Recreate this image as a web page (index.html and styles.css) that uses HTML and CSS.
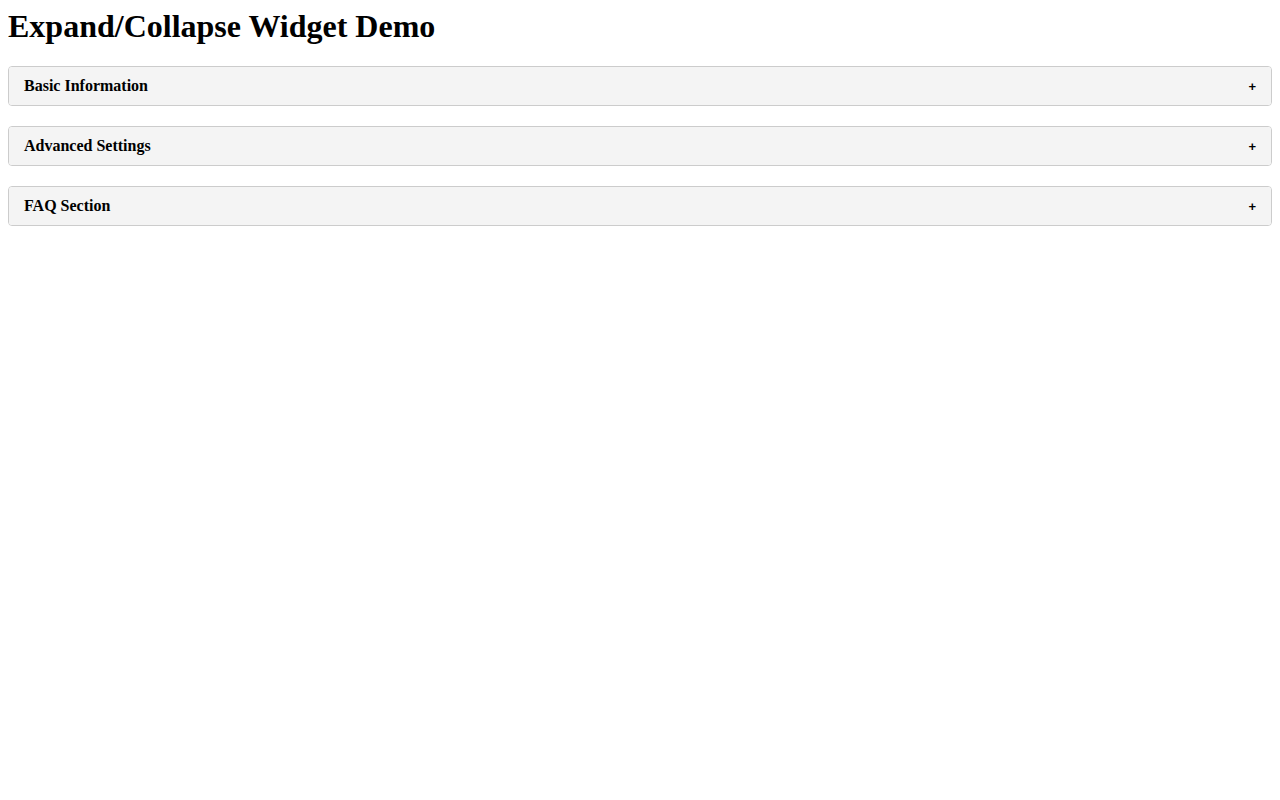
FILE: index.html
```html
<!DOCTYPE html>
<html>

<head>
    <title>Expand/Collapse Widget Demo</title>
    <link rel="stylesheet" href="styles.css">
</head>

<body>
    <h1>Expand/Collapse Widget Demo</h1>

    <!-- Sections -->
    <div class="widget">
        <div class="widget-header">
            <span>Basic Information</span>
            <span class="toggle">+</span>
        </div>
    </div>

    <div class="widget">
        <div class="widget-header">
            <span>Advanced Settings</span>
            <span class="toggle">+</span>
        </div>
    </div>

    <div class="widget">
        <div class="widget-header">
            <span>FAQ Section</span>
            <span class="toggle">+</span>
        </div>
    </div>
</body>

</html>
```

FILE: styles.css
```css
body {
    font-family: "Liberation Serif", "Times New Roman", serif;
    margin: 8px;
    background-color: #ffffff;
    color: #000;
}

h1 {
    font-size: 32px;
    margin: 0 0 21px;
}

.widget {
    border: 1px solid #ccc;
    border-radius: 4px;
    margin-bottom: 20px;
    overflow: hidden;
}

.widget-header {
    background-color: #f4f4f4;
    padding: 10px 15px;
    font-weight: bold;
    font-size: 16px;
    display: flex;
    justify-content: space-between;
    align-items: center;
    cursor: pointer;
}

.toggle {
    font-family: "Liberation Sans", Arial, sans-serif;
    font-size: 13px;
    font-weight: bold;
    color: #000;
}
```
